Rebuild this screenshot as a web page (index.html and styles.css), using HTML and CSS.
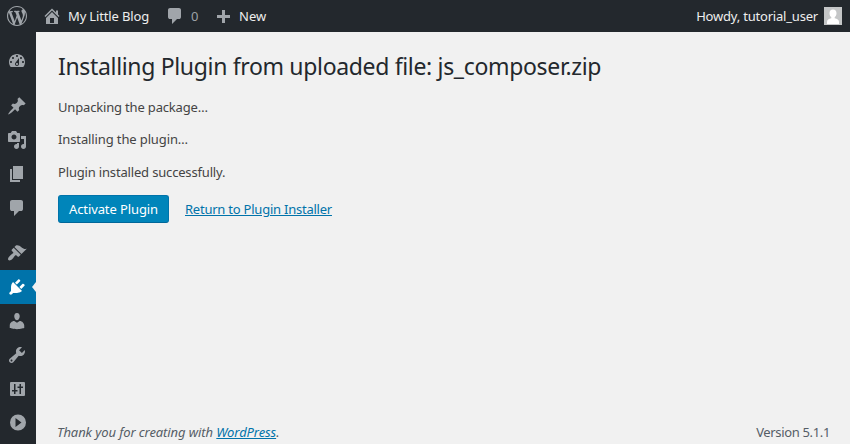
FILE: index.html
```html
<!DOCTYPE html>
<html lang="en">
<head>
<meta charset="utf-8">
<title>Installing Plugin</title>
<link rel="stylesheet" href="styles.css">
</head>
<body>
<header class="bar">
  <svg class="icon bar-logo" viewBox="0 0 20 20"><path d="M20 10c0-5.51-4.49-10-10-10C4.48 0 0 4.49 0 10c0 5.52 4.48 10 10 10 5.51 0 10-4.48 10-10zM7.78 15.37L4.37 6.22c.55-.02 1.17-.08 1.17-.08.5-.06.44-1.13-.06-1.11 0 0-1.45.11-2.37.11-.18 0-.37 0-.58-.01C4.12 2.69 6.87 1.11 10 1.11c2.33 0 4.45.87 6.05 2.34-.68-.11-1.65.39-1.65 1.58 0 .74.45 1.36.9 2.1.35.61.55 1.36.55 2.46 0 1.49-1.4 5-1.4 5l-3.03-8.37c.54-.02.82-.17.82-.17.5-.05.44-1.25-.06-1.22 0 0-1.44.12-2.38.12-.87 0-2.33-.12-2.33-.12-.5-.03-.56 1.2-.06 1.22l.92.08 1.26 3.41zM17.41 10c.24-.64.74-1.87.43-4.25.7 1.29 1.05 2.71 1.05 4.25 0 3.29-1.73 6.24-4.4 7.78.97-2.59 1.94-5.2 2.92-7.78zM6.1 18.09C3.12 16.65 1.11 13.53 1.11 10c0-1.3.23-2.48.72-3.59C3.25 10.3 4.67 14.2 6.1 18.09zm4.03-6.63l2.58 6.98c-.86.29-1.76.45-2.71.45-.79 0-1.57-.11-2.29-.33.81-2.38 1.62-4.74 2.42-7.1z"/></svg>
  <div class="bar-item bar-site">
    <svg class="icon" viewBox="0 0 20 20"><path d="M16 8.5l1.53 1.53-1.06 1.06L10 4.6l-6.47 6.49-1.06-1.06L10 2.5l4 4v-2h2v4zm-6-2.46l6 5.99V18H4v-5.97zM12 17v-5H8v5h4z"/></svg>
    <span class="site-name">My Little Blog</span>
  </div>
  <div class="bar-item bar-comments">
    <svg class="icon" viewBox="0 0 20 20"><path d="M5 2h9q.82 0 1.41.59T16 4v7q0 .82-.59 1.41T14 13h-2l-5 5v-5H5q-.82 0-1.41-.59T3 11V4q0-.82.59-1.41T5 2z"/></svg>
    <span class="count">0</span>
  </div>
  <div class="bar-item bar-new">
    <svg class="icon" viewBox="0 0 20 20"><path d="M16 9v3h-5v5H8v-5H3V9h5V4h3v5h5z"/></svg>
    <span class="new-label">New</span>
  </div>
  <div class="bar-user">
    <span class="howdy">Howdy, tutorial_user</span>
    <svg class="avatar" viewBox="0 0 18 18"><path fill="#c4c6c7" d="M0 0h18v18H0z"/><path fill="#fff" d="M9 2.5c2.3 0 3.5 1.6 3.5 3.8 0 1.8-.8 3.3-1.8 4v1c2.5.6 4.3 1.5 4.3 3.7v2H3v-2c0-2.2 1.8-3.1 4.3-3.7v-1c-1-.7-1.8-2.2-1.800-4 0-2.200 1.200-3.800 3.500-3.800z"/></svg>
  </div>
</header>
<div class="body">
  <nav class="side">
    <a class="row"><svg class="icon" viewBox="0 0 20 20"><path d="M3.760 16h12.480c1.100-1.370 1.760-3.110 1.760-5 0-4.420-3.580-8-8-8s-8 3.580-8 8c0 1.890.66 3.630 1.760 5zM10 4c.55 0 1 .45 1 1s-.45 1-1 1-1-.45-1-1 .45-1 1-1zM6 6c.55 0 1 .45 1 1s-.45 1-1 1-1-.45-1-1 .45-1 1-1zm8 0c.55 0 1 .45 1 1s-.45 1-1 1-1-.45-1-1 .45-1 1-1zm-5.370 5.550L12 7v6c0 1.100-.9 2-2 2s-2-.9-2-2c0-.57.24-1.080.63-1.450zM4 10c.55 0 1 .45 1 1s-.45 1-1 1-1-.45-1-1 .45-1 1-1zm12 0c.55 0 1 .45 1 1s-.45 1-1 1-1-.45-1-1 .45-1 1-1zm-5 3c0-.55-.45-1-1-1s-1 .45-1 1 .45 1 1 1 1-.45 1-1z"/></svg></a>
    <a class="row gap"><svg class="icon" viewBox="0 0 20 20"><path d="M10.44 3.02l1.82-1.82 6.36 6.35-1.83 1.82c-1.05-.68-2.48-.57-3.41.36l-.75.75c-.92.93-1.04 2.35-.35 3.41l-1.83 1.82-2.41-2.41-2.8 2.79c-.42.42-3.38 2.71-3.8 2.29s1.86-3.39 2.28-3.81l2.79-2.79L4.1 9.36l1.83-1.82c1.05.69 2.48.57 3.4-.36l.75-.75c.93-.92 1.05-2.35.36-3.41z"/></svg></a>
    <a class="row"><svg class="icon" viewBox="0 0 20 20"><path d="M13 11V4c0-.55-.45-1-1-1h-1.67L9 1H5L3.67 3H2c-.55 0-1 .45-1 1v7c0 .55.45 1 1 1h10c.55 0 1-.45 1-1zM7 4.5c1.38 0 2.5 1.12 2.5 2.5S8.38 9.5 7 9.5 4.5 8.38 4.5 7 5.62 4.5 7 4.5zM14 6h5v10.5c0 1.38-1.12 2.5-2.5 2.5S14 17.88 14 16.5s1.12-2.5 2.5-2.5c.17 0 .34.02.5.05V9h-3V6zm-4 8.05V13h2v3.5c0 1.38-1.12 2.5-2.5 2.5S7 17.88 7 16.5 8.12 14 9.5 14c.17 0 .34.02.5.05z"/></svg></a>
    <a class="row"><svg class="icon" viewBox="0 0 20 20"><path d="M6 15V2h10v13H6zm-1 1h8v2H3V5h2v11z"/></svg></a>
    <a class="row"><svg class="icon" viewBox="0 0 20 20"><path d="M5 2h9q.82 0 1.41.59T16 4v7q0 .82-.59 1.41T14 13h-2l-5 5v-5H5q-.82 0-1.41-.59T3 11V4q0-.82.59-1.41T5 2z"/></svg></a>
    <a class="row gap"><svg class="icon" viewBox="0 0 20 20"><path d="M14.48 11.06L7.41 3.99l1.5-1.5c.5-.56 2.3-.47 3.51.32 1.21.8 1.43 1.28 2.91 2.1 1.18.64 2.45 1.26 4.45.85zm-.71.71L6.7 4.7 4.93 6.47c-.39.39-.39 1.02 0 1.41l1.06 1.06c.39.39.39 1.03 0 1.42-.6.6-1.43 1.11-2.21 1.69-.35.26-.7.53-1.01.84C1.43 14.23.4 16.08 1.4 17.07c.99 1 2.84-.03 4.18-1.36.31-.31.58-.66.85-1.02.57-.78 1.08-1.61 1.69-2.21.39-.39 1.02-.39 1.41 0l1.06 1.06c.39.39 1.02.39 1.41 0z"/></svg></a>
    <a class="row current"><svg class="icon" viewBox="0 0 20 20"><path d="M13.11 4.36L9.87 7.6 8 5.73l3.24-3.24c.35-.34 1.05-.2 1.56.32.52.51.66 1.21.31 1.55zm-8 1.77l.91-1.12 9.01 9.01-1.19.84c-.71.71-2.63 1.16-3.82 1.16H6.14L4.9 17.26c-.59.59-1.54.59-2.12 0-.59-.58-.59-1.53 0-2.12l1.24-1.24v-3.88c0-1.13.4-3.19 1.09-3.89zm7.26 3.97l3.24-3.24c.34-.35 1.04-.21 1.55.31.52.51.66 1.21.31 1.55l-3.24 3.25z"/></svg></a>
    <a class="row"><svg class="icon" viewBox="0 0 20 20"><path d="M10 9.25c-2.27 0-2.73-3.44-2.73-3.44C7 4.02 7.82 2 9.97 2c2.16 0 2.98 2.02 2.71 3.81 0 0-.41 3.44-2.68 3.44zm0 2.57L12.72 10c2.39 0 4.52 2.33 4.52 4.53v2.49s-3.65 1.13-7.24 1.13c-3.65 0-7.24-1.13-7.24-1.13v-2.49c0-2.25 1.94-4.48 4.47-4.48z"/></svg></a>
    <a class="row"><svg class="icon" viewBox="0 0 20 20"><path d="M16.68 9.77c-1.34 1.34-3.3 1.67-4.95.99l-5.41 6.52c-.99.99-2.59.99-3.58 0s-.99-2.59 0-3.57l6.52-5.42c-.68-1.65-.35-3.61.99-4.95 1.28-1.28 3.12-1.62 4.72-1.06l-2.89 2.89 2.82 2.82 2.86-2.87c.53 1.58.18 3.39-1.08 4.65zM3.81 16.21c.4.39 1.04.39 1.43 0 .4-.4.4-1.04 0-1.43-.39-.4-1.03-.4-1.43 0-.39.39-.39 1.03 0 1.43z"/></svg></a>
    <a class="row"><svg class="icon" viewBox="0 0 20 20"><path fill-rule="evenodd" d="M4 3h13q1 0 1 1v12q0 1-1 1H4q-1 0-1-1V4q0-1 1-1zM7 5v6H5v1.500h2V15h1.500v-2.500h2V11h-2V5zM12.500 5v2.500h-2V9h2v6H14V9h2V7.500h-2V5z"/></svg></a>
    <a class="row"><svg class="icon" viewBox="0 0 20 20"><path fill-rule="evenodd" d="M11 1.500a8 8 0 1 1 0 16 8 8 0 0 1 0-16zM8.500 5v9l6-4.500z"/></svg></a>
  </nav>
  <main class="main">
    <h1>Installing Plugin from uploaded file: js_composer.zip</h1>
    <p class="p1">Unpacking the package…</p>
    <p class="p2">Installing the plugin…</p>
    <p class="p3">Plugin installed successfully.</p>
    <div class="actions">
      <a class="button">Activate Plugin</a>
      <a class="link return">Return to Plugin Installer</a>
    </div>
    <footer class="foot">
      <span class="thanks">Thank you for creating with <a class="link">WordPress</a>.</span>
      <span class="version">Version 5.1.1</span>
    </footer>
  </main>
</div>
</body>
</html>
```
FILE: styles.css
```css
* { box-sizing: border-box; }
body {
  margin: 0;
  height: 444px;
  display: flex;
  flex-direction: column;
  overflow: hidden;
  background: #f1f1f1;
  color: #444;
  font: 13px/20px "Noto Sans", sans-serif;
  white-space: nowrap;
}
.icon { display: block; flex: none; width: 20px; height: 20px; fill: #a0a5aa; }
.bar { flex: none; height: 32px; display: flex; align-items: center; background: #23282d; color: #eee; }
.bar-logo { margin-left: 7px; }
.bar-item { display: flex; align-items: center; flex: none; }
.bar-site { margin-left: 15px; width: 123px; gap: 6px; }
.site-name { letter-spacing: -0.15px; }
.bar-comments { width: 49px; gap: 6px; }
.bar-new { gap: 5px; }
.count { color: #9ca1a6; }
.bar-user { margin-left: auto; display: flex; align-items: center; gap: 6px; padding-right: 8px; }
.howdy { letter-spacing: -0.2px; }
.avatar { display: block; width: 18px; height: 18px; }
.body { flex: 1; display: flex; }
.side { width: 36px; flex: none; padding-top: 12px; background: #23282d; }
.row { display: flex; align-items: center; height: 34px; padding-left: 7px; position: relative; }
.gap { margin-top: 11px; }
.current { background: #0073aa; }
.current .icon { fill: #fff; }
.current::after {
  content: "";
  position: absolute;
  right: 0;
  top: 12px;
  border: solid transparent;
  border-width: 5px 4px 5px 0;
  border-right-color: #f1f1f1;
}
.main { flex: 1; display: flex; flex-direction: column; padding: 19px 20px 2px 22px; }
h1 { margin: 0; font-size: 23px; font-weight: 400; line-height: 30px; letter-spacing: -0.335px; color: #23282d; }
p { margin: 0; height: 20px; letter-spacing: -0.17px; }
.p1 { margin-top: 16px; }
.p2 { margin-top: 12px; letter-spacing: -0.12px; }
.p3 { margin-top: 13px; }
.actions { display: flex; align-items: center; gap: 16px; margin-top: 13px; }
.button {
  width: 111px;
  height: 28px;
  line-height: 26px;
  text-align: center;
  letter-spacing: -0.1px;
  color: #fff;
  background: #0085ba;
  border: 1px solid #0073aa;
  border-bottom-color: #006799;
  border-radius: 3px;
}
.link { color: #0073aa; text-decoration: underline; }
.return { letter-spacing: -0.23px; }
.foot { display: flex; justify-content: space-between; margin-top: auto; color: #555d66; }
.thanks { margin-left: -1px; font-style: italic; letter-spacing: -0.09px; }
.version { letter-spacing: -0.35px; }
```
